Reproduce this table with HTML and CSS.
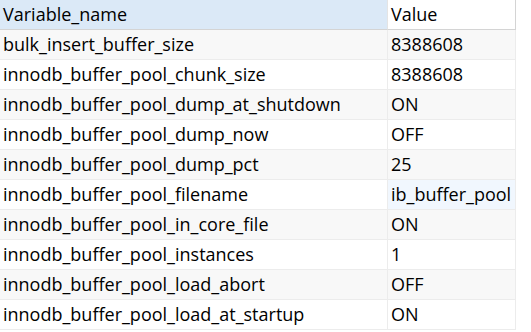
FILE: index.html
```html
<!DOCTYPE html>
<html>
<head>
<meta charset="utf-8">
<link rel="stylesheet" href="styles.css">
</head>
<body>
<div class="grid">
  <div class="cell head sorted">Variable_name</div>
  <div class="cell head last">Value</div>

  <div class="cell odd">bulk_insert_buffer_size</div>
  <div class="cell odd last">8388608</div>

  <div class="cell">innodb_buffer_pool_chunk_size</div>
  <div class="cell last">8388608</div>

  <div class="cell odd">innodb_buffer_pool_dump_at_shutdown</div>
  <div class="cell odd last">ON</div>

  <div class="cell">innodb_buffer_pool_dump_now</div>
  <div class="cell last">OFF</div>

  <div class="cell odd">innodb_buffer_pool_dump_pct</div>
  <div class="cell odd last">25</div>

  <div class="cell">innodb_buffer_pool_filename</div>
  <div class="cell last focus">ib_buffer_pool</div>

  <div class="cell odd">innodb_buffer_pool_in_core_file</div>
  <div class="cell odd last">ON</div>

  <div class="cell">innodb_buffer_pool_instances</div>
  <div class="cell last">1</div>

  <div class="cell odd">innodb_buffer_pool_load_abort</div>
  <div class="cell odd last">OFF</div>

  <div class="cell">innodb_buffer_pool_load_at_startup</div>
  <div class="cell last">ON</div>
</div>
</body>
</html>
```

FILE: styles.css
```css
html, body {
  margin: 0;
  padding: 0;
  background: #ffffff;
}
body {
  width: 531px;
  height: 332px;
  overflow: hidden;
  font-family: "Open Sans", "Noto Sans CJK SC", sans-serif;
  font-size: 18px;
  color: #000000;
}
.grid {
  display: grid;
  grid-template-columns: 388px 128px;
  width: 516px;
}
.cell {
  height: 29px;
  line-height: 29px;
  padding-left: 3px;
  border-bottom: 1px solid #ececec;
  border-right: 1px solid #ececec;
  white-space: nowrap;
  overflow: hidden;
  box-sizing: content-box;
  background: #ffffff;
}
.grid > .cell:nth-child(odd) {
  width: 384px;
}
.grid > .cell.last {
  width: 124px;
  padding-left: 3px;
}
.odd {
  background: #f8f8f8;
}
.head {
  background: #ffffff;
  border-bottom: 1px solid #d4d4d4;
  border-right: 1px solid #e4e4e4;
}
.head.last {
  border-right-color: #d4d4d4;
}
.sorted {
  background: #dbe9f7;
}
.focus {
  background: #f1f7fe;
}
```
